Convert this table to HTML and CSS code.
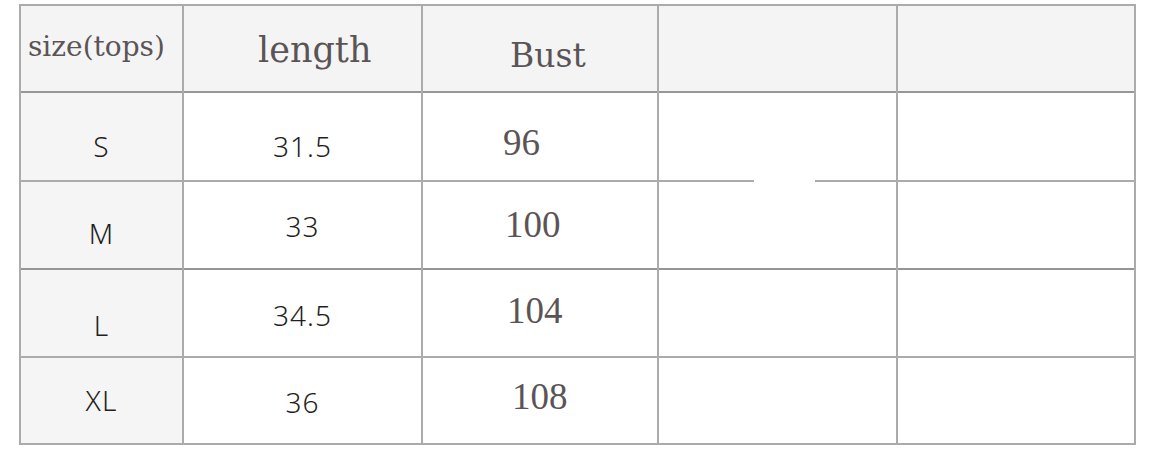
FILE: index.html
```html
<!DOCTYPE html>
<html lang="en">
<head>
<meta charset="utf-8">
<title>Size chart</title>
<link rel="stylesheet" href="styles.css">
</head>
<body>
<div class="chart">
  <div class="cell head h-size"><span class="mono small">size(tops)</span></div>
  <div class="cell head h-length"><span class="mono">length</span></div>
  <div class="cell head h-bust"><span class="mono">Bust</span></div>
  <div class="cell head"></div>
  <div class="cell head"></div>

  <div class="cell side"><span class="sans s-s">S</span></div>
  <div class="cell mid"><span class="sans l-s">31.5</span></div>
  <div class="cell num"><span class="serif b-s">96</span></div>
  <div class="cell"></div>
  <div class="cell"></div>

  <div class="cell side"><span class="sans s-m">M</span></div>
  <div class="cell mid"><span class="sans l-m">33</span></div>
  <div class="cell num"><span class="serif b-m">100</span></div>
  <div class="cell gap-cut"></div>
  <div class="cell"></div>

  <div class="cell side strong"><span class="sans s-l">L</span></div>
  <div class="cell mid strong"><span class="sans l-l">34.5</span></div>
  <div class="cell num strong"><span class="serif b-l">104</span></div>
  <div class="cell strong"></div>
  <div class="cell strong"></div>

  <div class="cell side"><span class="sans s-xl">XL</span></div>
  <div class="cell mid"><span class="sans l-xl">36</span></div>
  <div class="cell num"><span class="serif b-xl">108</span></div>
  <div class="cell"></div>
  <div class="cell"></div>
</div>
</body>
</html>
```
FILE: styles.css
```css
html, body {
  margin: 0;
  padding: 0;
  background: #ffffff;
}

.chart {
  margin: 4px 0 0 19px;
  width: 1113px;
  display: grid;
  grid-template-columns: 161px 237px 234px 237px 236px;
  grid-template-rows: 85px 87px 86px 86px 85px;
  gap: 2px;
  padding: 2px;
  background: #ababab;
}

.cell {
  background: #ffffff;
  display: flex;
  align-items: center;
  box-sizing: border-box;
}

.head {
  background: #f4f4f4;
  align-items: flex-start;
  box-shadow: 0 2px 0 #979797;
}

.side {
  background: #f5f5f5;
  justify-content: center;
}

.mid {
  justify-content: center;
}

.strong {
  box-shadow: 0 -2px 0 #959595;
}

.gap-cut {
  position: relative;
}

.gap-cut::before {
  content: "";
  position: absolute;
  top: -2px;
  left: 95px;
  width: 61px;
  height: 2px;
  background: #ffffff;
}

.mono {
  font-family: "DejaVu Serif", "Liberation Serif", serif;
  font-size: 35px;
  line-height: 1;
  letter-spacing: 0;
  color: #5b5456;
}

.mono.small {
  font-size: 28px;
}

.h-size { padding: 27px 0 0 7px; }
.h-length { padding: 27px 0 0 74px; }
.h-bust { padding: 33px 0 0 87px; }
.h-bust .mono { font-size: 33px; }

.sans {
  font-family: "Noto Sans", "DejaVu Sans", sans-serif;
  font-size: 28px;
  font-weight: 300;
  line-height: 1;
  letter-spacing: 1px;
  color: #1f1f1f;
}

.serif {
  font-family: "Liberation Serif", "Times New Roman", serif;
  font-size: 37px;
  line-height: 1;
  color: #5b5456;
}

/* per-cell vertical nudges, matching the reference */
.s-s { padding-top: 18px; }
.s-m { padding-top: 16px; }
.s-l { padding-top: 24px; }
.s-xl { padding-bottom: 2px; }

.l-s { padding-top: 18px; }
.l-m { padding-top: 2px; }
.l-l { padding-top: 4px; }
.l-xl { padding-top: 2px; }

.b-s { padding: 11px 0 0 80px; }
.b-m { padding: 0 0 2px 82px; }
.b-l { padding: 0 0 6px 84px; }
.b-xl { padding: 0 0 8px 89px; }
```
